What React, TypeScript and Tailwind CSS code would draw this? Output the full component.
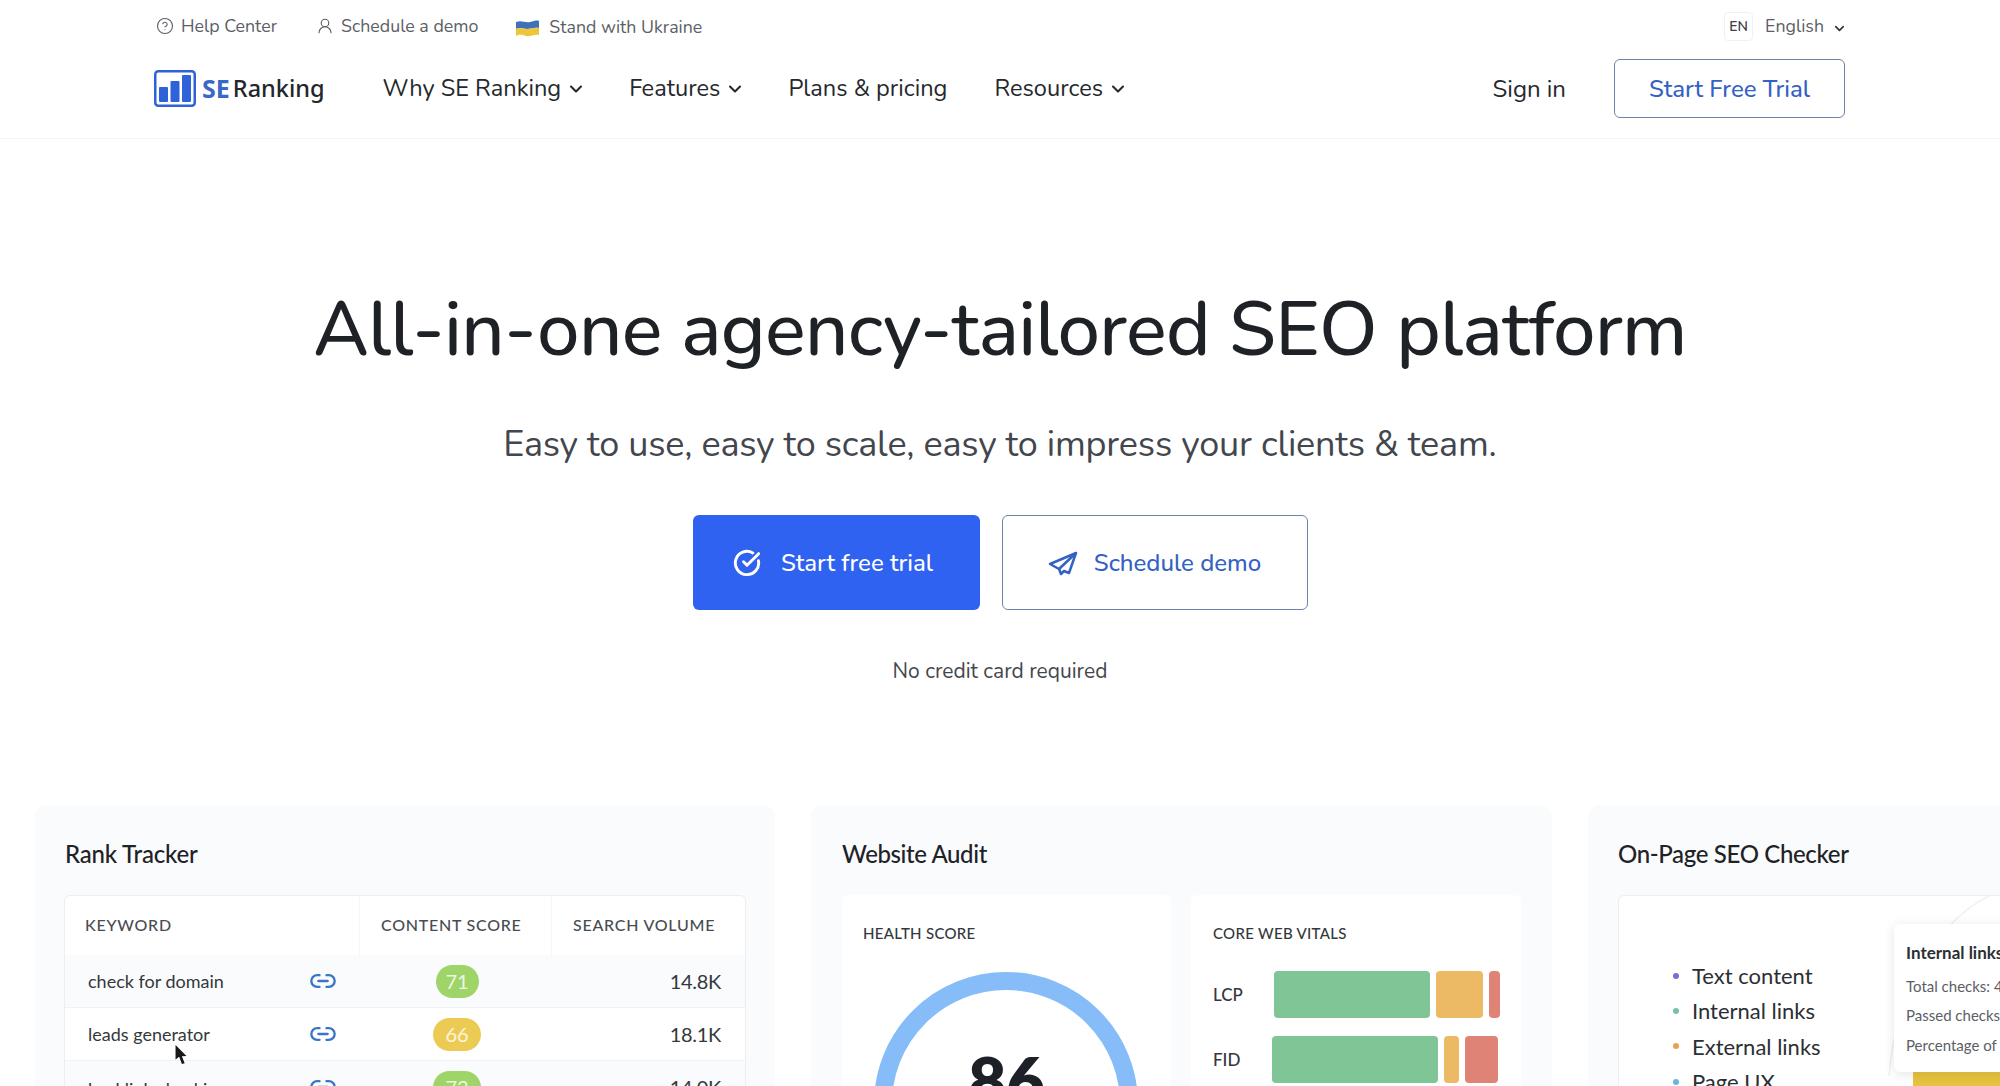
import { ChevronDown, CircleCheckBig, CircleHelp, Link2, UserRound } from "lucide-react";

const NAV_FONT = "font-['Nunito','Noto_Sans','Lato',sans-serif]";

function TopBar() {
  return (
    <div className="flex items-center justify-between h-[52px] pl-[156px] pr-[153px] text-[17.8px] text-[#5b6066]">
      <div className="flex items-center">
        <CircleHelp size={18} strokeWidth={1.5} />
        <span className="ml-[7px]">Help Center</span>
        <UserRound size={18} strokeWidth={1.5} className="ml-[39px]" />
        <span className="ml-[7px]">Schedule a demo</span>
        <svg width="23" height="17" viewBox="0 0 23 17" className="ml-[38px] mt-1">
          <path d="M0 2 C6 0 9 3 14 2 C18 1 21 0 23 1 L23 8 C18 7 15 9 11 9 C7 9 4 7 0 9 Z" fill="#3f71b8" />
          <path d="M0 9 C4 7 7 9 11 9 C15 9 18 7 23 8 L23 15 C18 14 15 17 10 16 C6 15 3 14 0 16 Z" fill="#edc63c" />
        </svg>
        <span className="ml-[10px] mt-0.5">Stand with Ukraine</span>
      </div>
      <div className="flex items-center">
        <span className="flex items-center justify-center w-[29px] h-[29px] rounded border border-[#f0f1f3] text-[14px] font-semibold text-[#3c4045]">
          EN
        </span>
        <span className="ml-3">English</span>
        <ChevronDown size={15} strokeWidth={2.5} className="ml-2 mt-1 text-[#2c3036]" />
      </div>
    </div>
  );
}

function NavLink({ label, caret }: { label: string; caret?: boolean }) {
  return (
    <span className={`flex items-center text-[23.6px] text-[#25282c] ${caret ? "-mr-1" : ""}`}>
      {label}
      {caret && <ChevronDown size={20} strokeWidth={2.5} className="ml-[5px] mt-0.5" />}
    </span>
  );
}

function Header() {
  return (
    <header className="border-b border-[#f2f3f5]">
      <TopBar />
      <div className="flex items-center h-[86px] pl-[154px] pr-[155px] pb-[13px]">
        <svg width="42" height="37" viewBox="0 0 42 37">
          <rect x="1.25" y="1.25" width="39.5" height="34.5" rx="3" fill="#fff" stroke="#2f62d8" strokeWidth="2.5" />
          <rect x="5" y="17" width="9" height="15" rx="1" fill="#2f62d8" />
          <rect x="16.5" y="11" width="9" height="21" rx="1" fill="#2f62d8" />
          <rect x="28" y="5" width="9" height="27" rx="1" fill="#2f62d8" />
        </svg>
        <span className="ml-1.5 text-[25px] font-bold text-[#3a68c8] font-['Noto_Sans',sans-serif]">SE</span>
        <span className="ml-[3px] text-[23.5px] font-medium text-[#23262a] font-['Noto_Sans',sans-serif]">Ranking</span>
        <nav className="flex items-center gap-[47px] ml-[58px]">
          <NavLink label="Why SE Ranking" caret />
          <NavLink label="Features" caret />
          <NavLink label="Plans & pricing" />
          <NavLink label="Resources" caret />
        </nav>
        <span className="ml-auto text-[24px] text-[#25282c]">Sign in</span>
        <span className="flex items-center justify-center ml-12 w-[231px] h-[59px] rounded-md border border-[#6c84a6] text-[24px] font-medium text-[#3461c4]">
          Start Free Trial
        </span>
      </div>
    </header>
  );
}

function Hero() {
  return (
    <section className="flex flex-col items-center">
      <h1 className="mt-[145px] text-[76px] leading-[92px] tracking-[-0.65px] font-medium text-[#1e2227]">
        All-in-one agency-tailored SEO platform
      </h1>
      <p className="mt-[46px] text-[36px] leading-[46px] tracking-[-0.18px] text-[#43474d]">
        Easy to use, easy to scale, easy to impress your clients & team.
      </p>
      <div className="flex gap-[22px] mt-[47px]">
        <span className="flex items-center justify-center gap-[20px] w-[287px] h-[95px] pr-[6px] rounded-md bg-[#2f62f0] text-[24px] font-medium text-white">
          <CircleCheckBig size={28} strokeWidth={2.5} />
          Start free trial
        </span>
        <span className="flex items-center justify-center gap-[16px] w-[306px] h-[95px] rounded-md border border-[#6c84a6] text-[24px] font-medium text-[#3461c4]">
          <svg width="30" height="26" viewBox="8 10 30 26" fill="none" stroke="currentColor" strokeWidth="2.5" strokeLinejoin="round">
            <path d="M36 13 L10 24 L19 29 L21 34 L24 31 L29 33 Z" />
            <path d="M36 13 L19 29" />
          </svg>
          Schedule demo
        </span>
      </div>
      <p className="mt-[46px] text-[21px] leading-[30px] text-[#43474d]">No credit card required</p>
    </section>
  );
}

const ROWS = [
  { keyword: "check for domain", score: "71", color: "bg-[#9ed468]", wide: false, volume: "14.8K", shade: true },
  { keyword: "leads generator", score: "66", color: "bg-[#eccb55]", wide: true, volume: "18.1K", shade: false },
  { keyword: "backlink checking", score: "73", color: "bg-[#9ed468]", wide: true, volume: "14.0K", shade: true },
];

function RankTracker() {
  return (
    <div className="rounded-t-xl bg-[#fafbfd] w-[740px] shrink-0 h-[320px] pt-[34px] pl-[29px] pr-[29px]">
      <h3 className="text-[24px] leading-[30px] font-medium tracking-[-0.2px] text-[#1f2226] ml-px">Rank Tracker</h3>
      <div className="mt-[26px] rounded-t-md border border-[#eceef1] bg-white text-[#34383d]">
        <div className="grid grid-cols-[294px_192px_1fr] h-[59px] items-center text-[16px] font-medium tracking-[0.75px] text-[#484c52]">
          <span className="pl-[20px] pb-0.5">KEYWORD</span>
          <span className="h-full flex items-center pl-[21px] pb-0.5 border-l border-[#f4f5f7]">CONTENT SCORE</span>
          <span className="h-full flex items-center pl-[21px] pb-0.5 border-l border-[#f4f5f7]">SEARCH VOLUME</span>
        </div>
        {ROWS.map((row) => (
          <div
            key={row.keyword}
            className={`group grid grid-cols-[294px_192px_1fr] h-[53px] items-center border-b border-[#f1f2f5] ${row.shade ? "bg-[#fafbfd]" : "bg-white"}`}
          >
            <span className="flex items-center justify-between pl-[23px] pr-[22px] text-[18px]">
              <span className="group-last:translate-y-0.5">{row.keyword}</span>
              <Link2 size={28} strokeWidth={2} className="text-[#3a76c4]" />
            </span>
            <span className="flex justify-center pl-1">
              <span
                className={`flex items-center justify-center h-[33px] rounded-full text-[20px] text-white/80 ${row.color} ${row.wide ? "w-[48px]" : "w-[43px]"}`}
              >
                {row.score}
              </span>
            </span>
            <span className="text-right pr-6 text-[20px] tracking-[-0.3px]">{row.volume}</span>
          </div>
        ))}
      </div>
    </div>
  );
}

function VitalRow({ label, parts }: { label: string; parts: string[] }) {
  return (
    <div className="flex items-center h-[47px] mb-[18px]">
      <span className="w-[61px] text-[17px] font-medium text-[#34383d]">{label}</span>
      <div className="flex gap-[6px] w-[226px]">
        {parts.map((cls) => (
          <span key={cls} className={`h-[47px] rounded-sm ${cls}`} />
        ))}
      </div>
    </div>
  );
}

function WebsiteAudit() {
  return (
    <div className="rounded-t-xl bg-[#fafbfd] w-[741px] shrink-0 h-[320px] pt-[34px] pl-[31px] pr-[31px]">
      <h3 className="text-[24px] leading-[30px] font-medium tracking-[-0.4px] text-[#1f2226]">Website Audit</h3>
      <div className="grid grid-cols-[329px_330px] gap-[20px] mt-[26px]">
        <div className="relative rounded-t-md bg-white h-[200px] pl-[21px] pt-[28px] overflow-hidden">
          <span className="block text-[15px] leading-5 font-medium tracking-[0.3px] text-[#34383d]">HEALTH SCORE</span>
          <svg width="264" height="264" viewBox="0 0 264 264" className="absolute left-[32px] top-[77px]">
            <circle cx="132" cy="132" r="123" fill="none" stroke="#86bcf7" strokeWidth="18" />
          </svg>
          <span className="absolute left-0 right-0 top-[147px] text-center text-[66px] leading-[76px] font-extrabold text-[#1d2127]">
            86
          </span>
        </div>
        <div className="rounded-t-md bg-white h-[200px] pl-[22px] pt-[28px] overflow-hidden">
          <span className="block text-[15px] leading-5 font-medium tracking-[0.3px] text-[#34383d]">CORE WEB VITALS</span>
          <div className="mt-[28px]">
            <VitalRow label="LCP" parts={["w-[156px] bg-[#80c595]", "w-[47px] bg-[#ecb964]", "w-[11px] bg-[#df8377]"]} />
            <VitalRow label="FID" parts={["w-[166px] bg-[#80c595] -ml-0.5", "w-[15px] bg-[#ecb964]", "w-[33px] bg-[#df8377]"]} />
          </div>
        </div>
      </div>
    </div>
  );
}

const CHECKS = [
  { label: "Text content", dot: "bg-[#7c6bd1]" },
  { label: "Internal links", dot: "bg-[#78c0a8]" },
  { label: "External links", dot: "bg-[#e8a250]" },
  { label: "Page UX", dot: "bg-[#6db4dc]" },
];

function OnPageChecker() {
  return (
    <div className="rounded-t-xl bg-[#fafbfd] w-[741px] shrink-0 h-[320px] pt-[34px] pl-[30px]">
      <h3 className="text-[24px] leading-[30px] font-medium tracking-[-0.35px] text-[#1f2226]">On-Page SEO Checker</h3>
      <div className="relative mt-[26px] rounded-t-md border border-[#eceef1] bg-white h-[200px]">
        <ul className="pt-[62px] pl-[54px]">
          {CHECKS.map((item) => (
            <li key={item.label} className="flex items-center h-[35.3px] text-[22px] text-[#2b2f34]">
              <span className={`w-[6px] h-[6px] rounded-full mr-[13px] ${item.dot}`} />
              {item.label}
            </li>
          ))}
        </ul>
        <svg width="120" height="180" viewBox="0 0 120 180" className="absolute left-[250px] top-0">
          <path d="M20 180 C25 110 60 30 120 0" fill="none" stroke="#eef0f3" strokeWidth="1.5" />
        </svg>
        <div className="absolute left-[294px] top-[176px] w-[200px] h-[30px] bg-[#e6c23f]" />
        <div className="absolute left-[275px] top-[28px] w-[260px] h-[148px] rounded-md bg-white shadow-[0_2px_12px_rgba(30,40,60,0.12)] pl-[12px] pt-[18px] text-[15px] text-[#5b6066] whitespace-nowrap">
          <p className="text-[17px] leading-[22px] font-bold text-[#2b2f34]">Internal links</p>
          <p className="mt-[12px] leading-[20px]">Total checks: 48</p>
          <p className="mt-[9px] leading-[20px]">Passed checks: 32</p>
          <p className="mt-[10px] leading-[20px]">Percentage of checks</p>
        </div>
      </div>
    </div>
  );
}

export default function App() {
  return (
    <div className={`relative h-[1086px] w-full overflow-hidden bg-white ${NAV_FONT}`}>
      <Header />
      <Hero />
      <div className="flex gap-[36px] pl-[35px] mt-[119px] font-['Lato',sans-serif]">
        <RankTracker />
        <WebsiteAudit />
        <OnPageChecker />
      </div>
      <svg width="14" height="20" viewBox="0 0 14 22" className="absolute left-[174px] top-[1045px]">
        <path d="M1 0 L1 16 L5 13 L8 21 L11 20 L8 12.5 L13 12 Z" fill="#16181b" />
      </svg>
    </div>
  );
}
